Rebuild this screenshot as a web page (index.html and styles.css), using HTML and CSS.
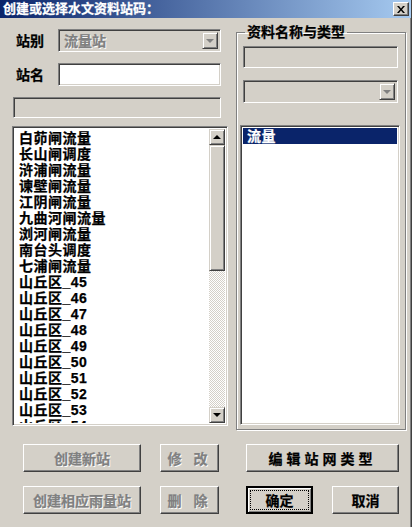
FILE: index.html
```html
<!DOCTYPE html>
<html lang="zh-CN">
<head>
    <meta charset="UTF-8">
    <title>创建或选择水文资料站码</title>
    <link rel="stylesheet" href="styles.css">
</head>
<body>
    <div class="window">
        <!-- 标题栏 -->
        <div class="titlebar">
            <span class="title">创建或选择水文资料站码：</span>
            <span class="close-btn">
                <svg width="8" height="7" viewBox="0 0 8 7"><path d="M0 0h2l2 2.5L6 0h2L5 3.5 8 7H6L4 4.5 2 7H0l3-3.5z" fill="#000"/></svg>
            </span>
        </div>

        <div class="client">
            <div class="main">
                <!-- 左侧 -->
                <div class="left-col">
                    <div class="field-row">
                        <span class="label">站别</span>
                        <div class="combo disabled">
                            <span class="combo-text">流量站</span>
                            <span class="combo-btn"><i class="arrow gray"></i></span>
                        </div>
                    </div>
                    <div class="field-row second">
                        <span class="label">站名</span>
                        <div class="edit white"></div>
                    </div>
                    <div class="edit status"></div>

                    <div class="listbox station-list">
                        <div class="list-items">
                            <div class="item">白茆闸流量</div>
                            <div class="item">长山闸调度</div>
                            <div class="item">浒浦闸流量</div>
                            <div class="item">谏壁闸流量</div>
                            <div class="item">江阴闸流量</div>
                            <div class="item">九曲河闸流量</div>
                            <div class="item">浏河闸流量</div>
                            <div class="item">南台头调度</div>
                            <div class="item">七浦闸流量</div>
                            <div class="item">山丘区_45</div>
                            <div class="item">山丘区_46</div>
                            <div class="item">山丘区_47</div>
                            <div class="item">山丘区_48</div>
                            <div class="item">山丘区_49</div>
                            <div class="item">山丘区_50</div>
                            <div class="item">山丘区_51</div>
                            <div class="item">山丘区_52</div>
                            <div class="item">山丘区_53</div>
                            <div class="item">山丘区_54</div>
                        </div>
                        <div class="scrollbar">
                            <span class="sb-btn"><i class="arrow up"></i></span>
                            <span class="sb-thumb"></span>
                            <span class="sb-track"></span>
                            <span class="sb-btn"><i class="arrow"></i></span>
                        </div>
                    </div>
                </div>

                <!-- 右侧：资料名称与类型 -->
                <fieldset class="group">
                    <legend>资料名称与类型</legend>
                    <div class="edit group-edit"></div>
                    <div class="combo disabled group-combo">
                        <span class="combo-text"></span>
                        <span class="combo-btn"><i class="arrow gray"></i></span>
                    </div>
                    <div class="listbox type-list">
                        <div class="item selected">流量</div>
                    </div>
                </fieldset>
            </div>

            <!-- 按钮 -->
            <div class="btn-row">
                <button class="btn wide" disabled>创建新站</button>
                <button class="btn small spaced" disabled>修 改</button>
                <button class="btn long spaced">编辑站网类型</button>
            </div>
            <div class="btn-row">
                <button class="btn wide" disabled>创建相应雨量站</button>
                <button class="btn small spaced" disabled>删 除</button>
                <button class="btn ok default">确定</button>
                <button class="btn ok cancel">取消</button>
            </div>
        </div>
    </div>
</body>
</html>
```

FILE: styles.css
```css
/* 整体窗口 */
body {
    margin: 0;
    background: #d4d0c8;
    font-family: "Liberation Sans", "Noto Sans CJK SC", sans-serif;
    font-weight: bold;
    font-size: 14px;
    color: #000;
    -webkit-text-stroke: 0.25px currentColor;
}

.window {
    width: 412px;
    height: 527px;
    box-sizing: border-box;
    border-right: 1px solid #404040;
    box-shadow: inset -1px 0 #808080;
    overflow: hidden;
}

/* 标题栏 */
.titlebar {
    height: 18px;
    display: flex;
    align-items: center;
    justify-content: space-between;
    padding: 0 2px 0 3px;
    background: linear-gradient(to right, #0a246a, #a6caf0);
    color: #fff;
}

.title {
    font-size: 13px;
    line-height: 18px;
}

.close-btn {
    width: 16px;
    height: 14px;
    box-sizing: border-box;
    display: flex;
    align-items: center;
    justify-content: center;
    background: #d4d0c8;
    border: 1px solid;
    border-color: #fff #404040 #404040 #fff;
    box-shadow: inset -1px -1px #808080;
}

/* 客户区 */
.client {
    padding: 6px 0 0 12px;
}

.main {
    display: flex;
}

.left-col {
    width: 216px;
    margin-top: 5px;
}

.field-row {
    display: flex;
    align-items: center;
    height: 23px;
}

.field-row.second {
    margin-top: 11px;
}

.label {
    width: 42px;
    padding-left: 4px;
    line-height: 16px;
}

/* 凹陷边框 */
.edit,
.combo,
.listbox {
    box-sizing: border-box;
    border: 1px solid;
    border-color: #808080 #fff #fff #808080;
    box-shadow: inset 1px 1px #404040, inset -1px -1px #d4d0c8;
}

.edit.white {
    width: 163px;
    height: 23px;
    background: #fff;
}

.edit.status {
    width: 208px;
    height: 21px;
    margin: 11px 0 0 1px;
}

.combo {
    width: 163px;
    height: 23px;
    display: flex;
    align-items: center;
    justify-content: space-between;
    padding: 2px;
}

.combo-text {
    padding-left: 3px;
    line-height: 16px;
    color: #808080;
    text-shadow: 1px 1px #fff;
}

.combo-btn {
    width: 16px;
    height: 17px;
    box-sizing: border-box;
    display: flex;
    align-items: center;
    justify-content: center;
    border: 1px solid;
    border-color: #d4d0c8 #404040 #404040 #d4d0c8;
    box-shadow: inset 1px 1px #fff, inset -1px -1px #808080;
}

.arrow {
    width: 0;
    height: 0;
    border-left: 4px solid transparent;
    border-right: 4px solid transparent;
    border-top: 4px solid #000;
}

.arrow.up {
    border-top: none;
    border-bottom: 4px solid #000;
}

.arrow.gray {
    border-top-color: #808080;
}

/* 列表 */
.listbox {
    background: #fff;
    padding: 2px;
    overflow: hidden;
}

.station-list {
    display: flex;
    width: 216px;
    height: 300px;
    margin-top: 8px;
}

.list-items {
    flex: 1;
    padding: 1px 0 0 4px;
    letter-spacing: 0.5px;
    overflow: hidden;
}

.item {
    height: 16px;
    line-height: 16px;
    white-space: nowrap;
}

.scrollbar {
    width: 16px;
    display: flex;
    flex-direction: column;
}

.sb-btn {
    height: 16px;
    box-sizing: border-box;
    display: flex;
    align-items: center;
    justify-content: center;
    background: #d4d0c8;
    border: 1px solid;
    border-color: #d4d0c8 #404040 #404040 #d4d0c8;
    box-shadow: inset 1px 1px #fff, inset -1px -1px #808080;
}

.sb-thumb {
    height: 126px;
    box-sizing: border-box;
    background: #d4d0c8;
    border: 1px solid;
    border-color: #d4d0c8 #404040 #404040 #d4d0c8;
    box-shadow: inset 1px 1px #fff, inset -1px -1px #808080;
}

.sb-track {
    flex: 1;
    background: repeating-conic-gradient(#fff 0 25%, #d4d0c8 0 50%) 0 0 / 2px 2px;
}

/* 分组框 */
.group {
    width: 170px;
    box-sizing: border-box;
    margin: 0 0 0 8px;
    padding: 0 0 4px 0;
    border: 1px solid #808080;
    box-shadow: inset 1px 1px #fff, 1px 1px #fff;
}

.group legend {
    padding: 0 2px;
    margin-left: 8px;
    line-height: 16px;
}

.group-edit {
    width: 155px;
    height: 22px;
    margin: 6px 0 0 6px;
}

.group-combo {
    width: 155px;
    margin: 12px 0 0 6px;
}

.type-list {
    width: 160px;
    height: 300px;
    margin: 22px 0 0 3px;
}

.item.selected {
    background: #0a246a;
    color: #fff;
    padding-left: 4px;
    letter-spacing: 0.5px;
}

/* 按钮 */
.btn-row {
    display: flex;
    padding-left: 11px;
    margin-top: 14px;
}

.btn-row + .btn-row {
    margin-top: 14px;
}

.btn {
    height: 28px;
    box-sizing: border-box;
    padding: 0;
    font: inherit;
    font-size: 14px;
    background: #d4d0c8;
    color: #000;
    border: 1px solid;
    border-color: #fff #404040 #404040 #fff;
    box-shadow: inset -1px -1px #808080;
}

.btn:disabled {
    color: #808080;
    text-shadow: 1px 1px #fff;
}

.btn.wide {
    width: 118px;
}

.btn.small {
    width: 59px;
    margin-left: 19px;
}

.btn.long {
    width: 153px;
    margin-left: 27px;
}

.btn.spaced {
    letter-spacing: 4px;
}

.btn.ok {
    width: 67px;
}

.btn.default {
    margin-left: 27px;
    border: 2px solid #000;
    box-shadow: inset 1px 1px #fff, inset -1px -1px #808080;
    outline: 1px dotted #000;
    outline-offset: -5px;
}

.btn.cancel {
    margin-left: 19px;
}
```
